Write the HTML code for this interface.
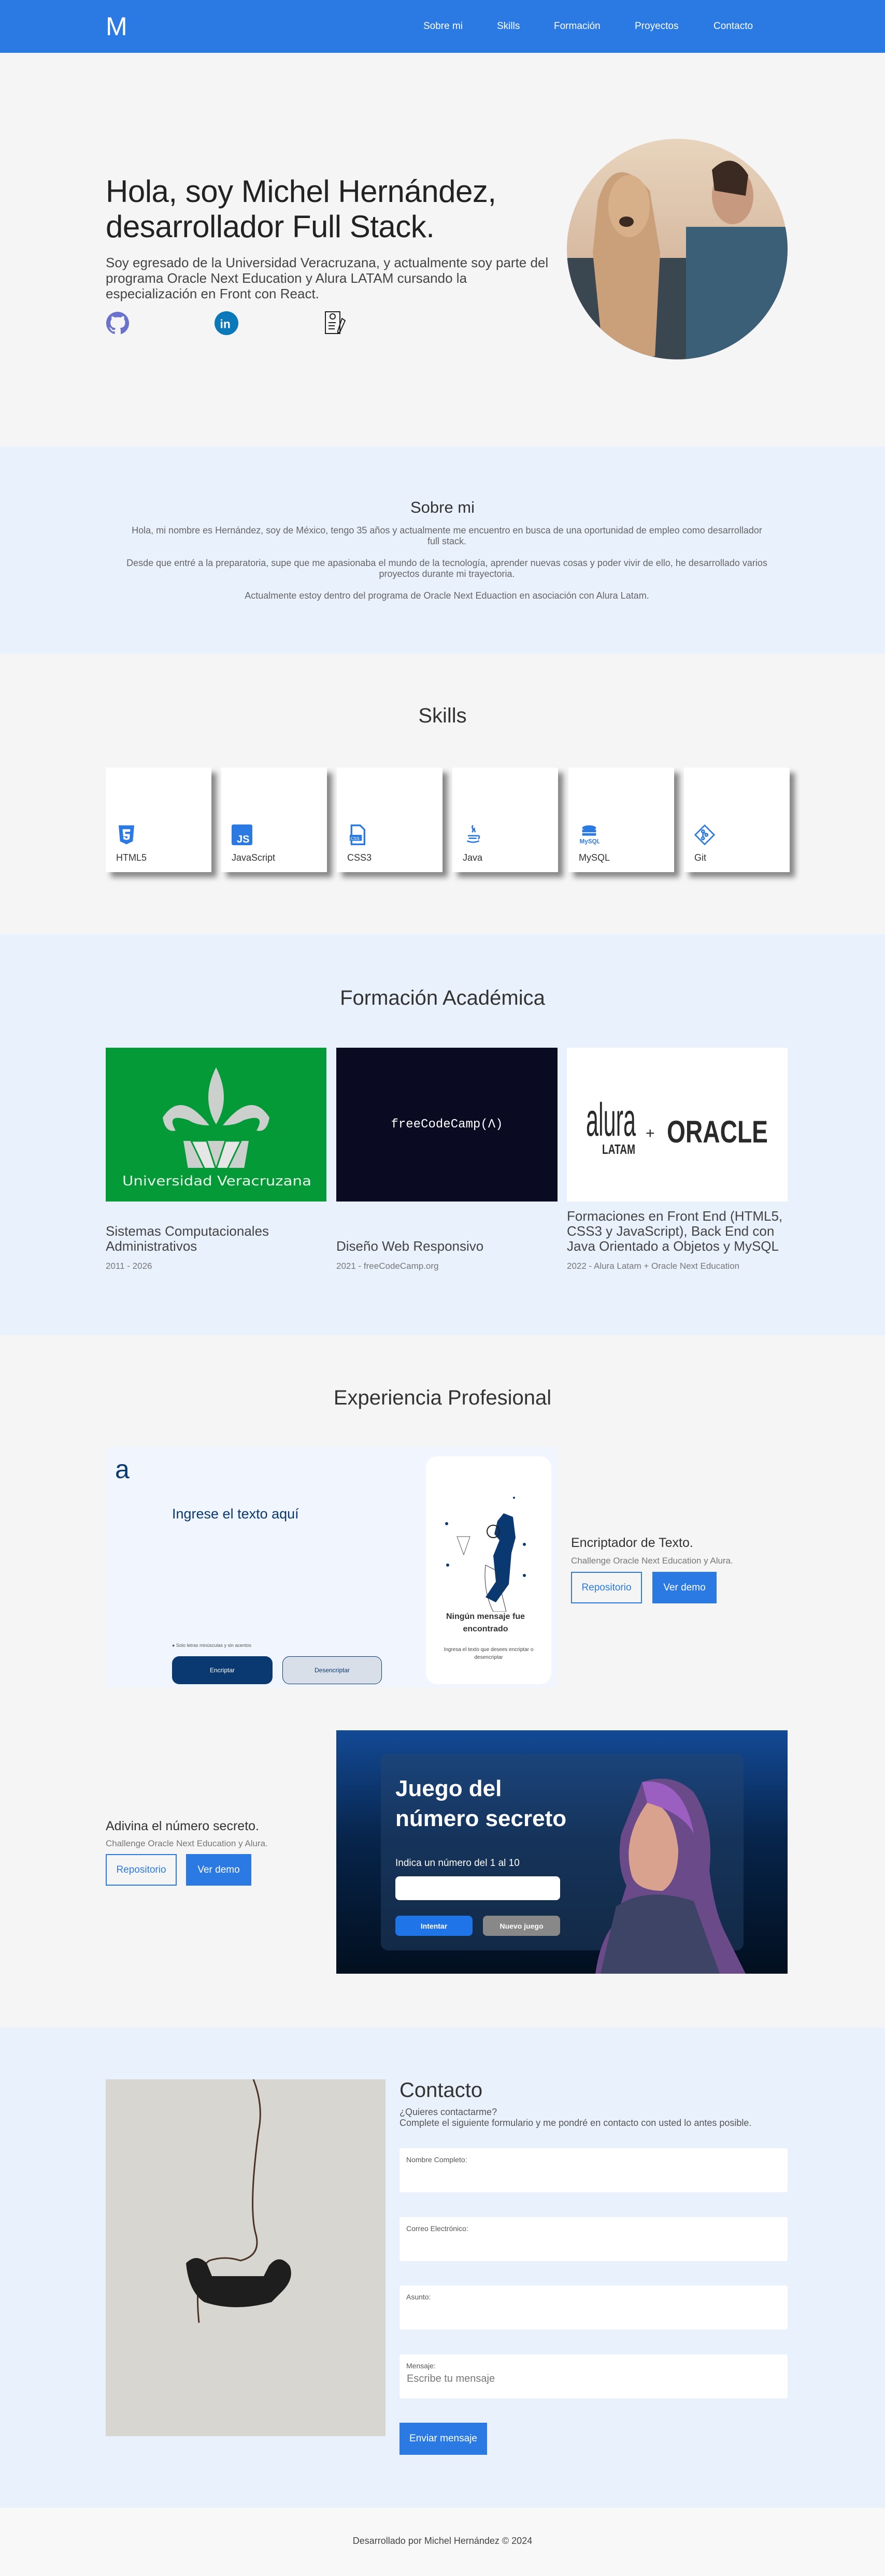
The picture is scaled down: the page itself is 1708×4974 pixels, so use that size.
<!DOCTYPE html>
<html><head><meta charset="utf-8"><style>
*{margin:0;padding:0;box-sizing:border-box}
body{width:1708px;height:4974px;font-family:"Liberation Sans",sans-serif;background:#f5f5f5;color:#333;position:relative;overflow:hidden}
.abs{position:absolute}
nav{position:absolute;left:0;top:0;width:1708px;height:102px;background:#2b7ae4}
nav .logo{position:absolute;left:204px;top:22px;color:#fff;font-size:50px;font-weight:300}
nav a{position:absolute;top:40px;color:#fff;font-size:19px;text-decoration:none}
h2{position:absolute;left:0;width:1708px;text-align:center;font-weight:400;color:#333}
.sec{position:absolute;left:0;width:1708px}
.card{position:absolute;top:1482px;width:204px;height:202px;background:#fff;box-shadow:10px 10px 10px rgba(0,0,0,.45)}
.card .ic{position:absolute;left:20px;top:110px;width:40px;height:40px}
.card span{position:absolute;left:20px;top:164px;font-size:18px;color:#333}
.ftitle{position:absolute;font-size:26px;color:#444;line-height:29px}
.fdate{position:absolute;top:2435px;font-size:17px;color:#777}
.btn{position:absolute;height:61px;display:flex;align-items:center;justify-content:center;font-size:19px}
.bo{border:2px solid #2b7ae4;color:#2b7ae4;background:transparent}
.bf{background:#2b7ae4;color:#fff}
.inp{position:absolute;left:771px;width:749px;height:85px;background:#fff;border-radius:4px}
.inp span{position:absolute;left:13px;top:14px;font-size:14px;color:#555}
</style></head><body>
<nav><div class="logo">M</div>
<a style="left:817px">Sobre mi</a><a style="left:959px">Skills</a><a style="left:1069px">Formación</a><a style="left:1225px">Proyectos</a><a style="left:1377px">Contacto</a></nav>

<div class="abs" style="left:204px;top:336px;font-size:60px;line-height:68px;color:#222;width:920px;letter-spacing:-0.5px">Hola, soy Michel Hernández,<br>desarrollador Full Stack.</div>
<div class="abs" style="left:204px;top:492px;font-size:26px;line-height:30px;color:#444;width:880px">Soy egresado de la Universidad Veracruzana, y actualmente soy parte del programa Oracle Next Education y Alura LATAM cursando la especialización en Front con React.</div>
<svg class="abs" style="left:204px;top:600px" width="46" height="48" viewBox="0 0 24 24"><path fill="#6b72cc" d="M12 .5C5.6.5.5 5.6.5 12c0 5.1 3.3 9.4 7.9 10.9.6.1.8-.3.8-.6v-2c-3.2.7-3.9-1.5-3.9-1.5-.5-1.300-1.3-1.7-1.3-1.7-1-.7.1-.7.1-.7 1.2.1 1.8 1.2 1.8 1.2 1 1.8 2.8 1.3 3.5 1 .1-.8.4-1.3.7-1.600-2.6-.3-5.3-1.3-5.3-5.7 0-1.3.5-2.3 1.2-3.1-.1-.3-.5-1.5.1-3.1 0 0 1-.3 3.2 1.2a11 11 0 0 1 5.8 0C17.3 4.7 18.3 5 18.3 5c.6 1.6.2 2.8.1 3.1.8.8 1.2 1.8 1.2 3.1 0 4.4-2.7 5.4-5.3 5.7.4.4.8 1.1.8 2.2v3.2c0 .3.2.7.8.6A11.5 11.5 0 0 0 23.5 12C23.5 5.6 18.4.5 12 .5z"/></svg>
<svg class="abs" style="left:414px;top:600px" width="46" height="48" viewBox="0 0 24 24"><circle cx="12" cy="12" r="12" fill="#0a78b9"/><text x="5.5" y="17" font-family="Liberation Sans" font-weight="700" font-size="12" fill="#fff">in</text></svg>
<svg class="abs" style="left:622px;top:598px" width="48" height="50" viewBox="0 0 24 24" fill="none" stroke="#222" stroke-width="1"><rect x="3" y="1.5" width="14" height="21"/><circle cx="10" cy="6" r="2.5"/><path d="M6 12h7M6 15h6M6 18h6M19 8l3 2-5 11-2 1 0-2z"/></svg>
<svg class="abs" style="left:1094px;top:268px" width="426" height="426"><defs><clipPath id="c"><circle cx="213" cy="213" r="213"/></clipPath><linearGradient id="g" x1="0" y1="0" x2="0" y2="1"><stop offset="0" stop-color="#e8d4bd"/><stop offset="1" stop-color="#c9a48a"/></linearGradient></defs><g clip-path="url(#c)"><rect width="426" height="426" fill="url(#g)"/><rect x="0" y="230" width="426" height="196" fill="#3a4650"/><rect x="230" y="170" width="196" height="256" fill="#3c5f78"/><ellipse cx="320" cy="110" rx="40" ry="55" fill="#c79a80"/><path d="M280 60q40-40 70 10l-5 40-60-10z" fill="#3a2a22"/><path d="M60 120q30-100 100-20l20 120-10 200h-100l-20-200z" fill="#caa07a"/><ellipse cx="120" cy="130" rx="40" ry="60" fill="#d7b08a"/><ellipse cx="115" cy="160" rx="14" ry="10" fill="#3a2a22"/></g></svg>

<div class="sec" style="top:862px;height:400px;background:#e9f1fc"></div>
<h2 style="top:962px;font-size:31px">Sobre mi</h2>
<div class="abs" style="left:209px;top:1014px;width:1307px;text-align:center;font-size:18px;line-height:21px;color:#666">Hola, mi nombre es Hernández, soy de México, tengo 35 años y actualmente me encuentro en busca de una oportunidad de empleo como desarrollador<br>full stack.<br><br>Desde que entré a la preparatoria, supe que me apasionaba el mundo de la tecnología, aprender nuevas cosas y poder vivir de ello, he desarrollado varios proyectos durante mi trayectoria.<br><br>Actualmente estoy dentro del programa de Oracle Next Eduaction en asociación con Alura Latam.</div>

<h2 style="top:1360px;font-size:40px">Skills</h2>
<div class="card" style="left:204px"><svg class="ic" viewBox="0 0 24 24"><path d="M3 1h18l-1.6 18.5L12 23l-7.4-3.5z" fill="#2b7ae4"/><path d="M7.5 5.5h9l-.3 3H10.5l.2 2.5h5.3l-.5 6L12 18l-3.5-1-.2-2.5h2.5l.1 1.2 1.1.3 1.2-.3.1-2H8.3z" fill="#fff"/></svg><span>HTML5</span></div>
<div class="card" style="left:427px"><svg class="ic" viewBox="0 0 24 24"><rect width="24" height="24" rx="2" fill="#2b7ae4"/><text x="6" y="21" font-family="Liberation Sans" font-weight="700" font-size="12" fill="#fff">JS</text></svg><span>JavaScript</span></div>
<div class="card" style="left:650px"><svg class="ic" viewBox="0 0 24 24"><path d="M5 1h10l5 5v17H5z" fill="none" stroke="#2b7ae4" stroke-width="2"/><rect x="3" y="12" width="14" height="7" fill="#2b7ae4"/><text x="4" y="18" font-size="5" fill="#fff" font-family="Liberation Sans">CSS</text></svg><span>CSS3</span></div>
<div class="card" style="left:873px"><svg class="ic" viewBox="0 0 24 24" fill="none" stroke="#2b7ae4" stroke-width="1.6"><path d="M12 1c-3 3 2 4-1 8M14 4c-2 2 1 3 0 5M6 13h11M7 16h9M5 19q7 3 14 0M17 13q4 0 1 4"/></svg><span>Java</span></div>
<div class="card" style="left:1097px"><svg class="ic" viewBox="0 0 24 24"><ellipse cx="12" cy="4" rx="8" ry="3" fill="#2b7ae4"/><rect x="4" y="6" width="16" height="3" fill="#2b7ae4"/><rect x="4" y="10" width="16" height="3" fill="#2b7ae4"/><text x="1" y="22" font-size="7" font-weight="700" fill="#2b7ae4" font-family="Liberation Sans">MySQL</text></svg><span>MySQL</span></div>
<div class="card" style="left:1320px"><svg class="ic" viewBox="0 0 24 24" fill="none" stroke="#2b7ae4" stroke-width="1.6"><path d="M12 1l11 11-11 11L1 12z"/><circle cx="10" cy="8" r="1.5"/><circle cx="14" cy="12" r="1.5"/><circle cx="10" cy="16" r="1.5"/><path d="M10 9.5v5M11 9l2 2"/></svg><span>Git</span></div>

<div class="sec" style="top:1804px;height:774px;background:#e9f1fc"></div>
<h2 style="top:1905px;font-size:40px">Formación Académica</h2>
<svg class="abs" style="left:204px;top:2023px" width="426" height="297"><rect width="426" height="297" fill="#039a37"/><path d="M213 38q-30 60 0 110q30-50 0-110zM200 150q-55-70-90-15 5 30 25 25-20-35 25-20 15 10 40 10zM226 150q55-70 90-15-5 30-25 25 20-35-25-20-15 10-40 10z" fill="#ccd0cc"/><path d="M150 180h126l-10 60q-53 50-106 0z" fill="#ccd0cc"/><path d="M165 180h30l18 55 18-55h30l-48 100z" fill="#e6e6e6" stroke="#039a37" stroke-width="3"/><rect x="0" y="232" width="426" height="65" fill="#039a37"/><text x="32" y="266" textLength="365" lengthAdjust="spacingAndGlyphs" font-family="DejaVu Sans" font-size="26" fill="#e8f0e8">Universidad Veracruzana</text></svg>
<div class="abs" style="left:649px;top:2023px;width:427px;height:297px;background:#0a0a23;color:#fff;font-family:'Liberation Mono',monospace;font-size:24px;display:flex;align-items:center;justify-content:center">freeCodeCamp(&#923;)</div>
<svg class="abs" style="left:1094px;top:2023px" width="426" height="297"><rect width="426" height="297" fill="#fff"/><text x="37" y="170" textLength="96" lengthAdjust="spacingAndGlyphs" font-family="Liberation Sans" font-size="90" fill="#2a2a2a">alura</text><text x="68" y="205" textLength="64" lengthAdjust="spacingAndGlyphs" font-family="Liberation Sans" font-weight="700" font-size="26" fill="#2a2a2a">LATAM</text><text x="152" y="175" font-family="Liberation Sans" font-size="30" fill="#2a2a2a">+</text><text x="193" y="183" textLength="195" lengthAdjust="spacingAndGlyphs" font-family="Liberation Sans" font-weight="700" font-size="60" fill="#2a2a2a">ORACLE</text></svg>
<div class="ftitle" style="left:204px;top:2363px">Sistemas Computacionales<br>Administrativos</div>
<div class="ftitle" style="left:649px;top:2392px">Diseño Web Responsivo</div>
<div class="ftitle" style="left:1094px;top:2334px;width:430px">Formaciones en Front End (HTML5, CSS3 y JavaScript), Back End con Java Orientado a Objetos y MySQL</div>
<div class="fdate" style="left:204px">2011 - 2026</div>
<div class="fdate" style="left:649px">2021 - freeCodeCamp.org</div>
<div class="fdate" style="left:1094px">2022 - Alura Latam + Oracle Next Education</div>

<h2 style="top:2677px;font-size:40px">Experiencia Profesional</h2>
<div class="abs" style="left:204px;top:2794px;width:872px;height:464px;background:#f1f5fd">
<div class="abs" style="left:18px;top:14px;font-size:50px;color:#0a3871">a</div>
<div class="abs" style="left:128px;top:114px;font-size:27px;color:#0a3871">Ingrese el texto aquí</div>
<div class="abs" style="left:128px;top:378px;font-size:9px;color:#555">● Solo letras minúsculas y sin acentos</div>
<div class="abs" style="left:128px;top:404px;width:194px;height:54px;border-radius:14px;background:#0a3871;color:#fff;font-size:12px;display:flex;align-items:center;justify-content:center">Encriptar</div>
<div class="abs" style="left:341px;top:404px;width:192px;height:54px;border-radius:14px;background:#d8dfe8;border:1px solid #0a3871;color:#0a3871;font-size:12px;display:flex;align-items:center;justify-content:center">Desencriptar</div>
<div class="abs" style="left:618px;top:18px;width:242px;height:440px;border-radius:22px;background:#fff">
<svg class="abs" style="left:20px;top:60px" width="200" height="240"><path d="M130 50l-12 15-6 25 10 12-12 30 5 50-20 30 20 10 25-35 5-60 8-30-5-40z" fill="#0a3871"/><path d="M95 150q-5 50 15 90h25l-20-80z" fill="none" stroke="#333"/><circle cx="110" cy="85" r="12" fill="none" stroke="#222" stroke-width="2"/><path d="M40 95h25l-12 35z" fill="none" stroke="#555"/><circle cx="20" cy="70" r="3" fill="#0a3871"/><circle cx="22" cy="150" r="3" fill="#0a3871"/><circle cx="170" cy="110" r="3" fill="#0a3871"/><circle cx="170" cy="170" r="3" fill="#0a3871"/><circle cx="150" cy="20" r="2" fill="#0a3871"/></svg>
<div class="abs" style="left:0;width:230px;top:298px;text-align:center;font-size:16px;color:#333;font-weight:700;line-height:24px">Ningún mensaje fue<br>encontrado</div>
<div class="abs" style="left:10px;width:222px;top:366px;text-align:center;font-size:10px;color:#444;line-height:15px">Ingresa el texto que desees encriptar o desencriptar</div></div>
</div>
<div class="abs" style="left:1102px;top:2965px;font-size:25px;color:#333">Encriptador de Texto.</div>
<div class="abs" style="left:1102px;top:3004px;font-size:17px;color:#777">Challenge Oracle Next Education y Alura.</div>
<div class="btn bo" style="left:1102px;top:3035px;width:137px">Repositorio</div>
<div class="btn bf" style="left:1259px;top:3035px;width:124px">Ver demo</div>

<div class="abs" style="left:649px;top:3341px;width:871px;height:470px;background:linear-gradient(#134a96,#07244a 45%,#020f1f);overflow:hidden">
<div class="abs" style="left:86px;top:45px;width:700px;height:380px;border-radius:14px;background:rgba(40,70,110,.45)"></div>
<svg class="abs" style="left:480px;top:80px" width="330" height="390"><path d="M110 20q60-20 100 20 40 60 30 150 10 80 30 120l40 80H20q10-70 40-100 10-40 20-70-20-40-10-100z" fill="#6b4a8a"/><path d="M120 60q50 0 60 90 0 60-30 80-50 0-60-30-20-70 30-140z" fill="#d9a28e"/><path d="M60 260q60-40 150-10l50 140H30z" fill="#3d4466"/><path d="M110 20q80-10 100 100-20-40-90-60z" fill="#9b5fc2"/></svg>
<div class="abs" style="left:114px;top:84px;font-size:44px;font-weight:700;color:#fff;line-height:58px">Juego del<br>número secreto</div>
<div class="abs" style="left:114px;top:246px;font-size:19px;color:#fff">Indica un número del 1 al 10</div>
<div class="abs" style="left:114px;top:282px;width:318px;height:46px;background:#fff;border-radius:8px"></div>
<div class="abs" style="left:114px;top:358px;width:149px;height:39px;background:#1f75e8;border-radius:8px;color:#fff;font-size:14px;font-weight:700;display:flex;align-items:center;justify-content:center">Intentar</div>
<div class="abs" style="left:283px;top:358px;width:149px;height:39px;background:#888;border-radius:8px;color:#fff;font-size:14px;font-weight:700;display:flex;align-items:center;justify-content:center">Nuevo juego</div>
</div>
<div class="abs" style="left:204px;top:3512px;font-size:25px;color:#333">Adivina el número secreto.</div>
<div class="abs" style="left:204px;top:3550px;font-size:17px;color:#777">Challenge Oracle Next Education y Alura.</div>
<div class="btn bo" style="left:204px;top:3580px;width:137px">Repositorio</div>
<div class="btn bf" style="left:359px;top:3580px;width:126px">Ver demo</div>

<div class="sec" style="top:3915px;height:927px;background:#e9f1fc"></div>
<svg class="abs" style="left:204px;top:4015px" width="540" height="689"><rect width="540" height="689" fill="#d8d6d1"/><path d="M285 0q20 50 10 100-20 150-5 200 10 40-30 50-30-10-60 0-30 20-20 120 20 40" fill="none" stroke="#4a3325" stroke-width="3"/><path d="M155 355q20-20 40 0l10 25h100l10-20q20-25 40 0 10 25-15 50l-20 20q-70 20-130 0-30-20-35-75z" fill="#1e1e1e"/></svg>
<div class="abs" style="left:771px;top:4014px;font-size:40px;color:#333">Contacto</div>
<div class="abs" style="left:771px;top:4068px;font-size:18px;color:#555;line-height:21px">¿Quieres contactarme?<br>Complete el siguiente formulario y me pondré en contacto con usted lo antes posible.</div>
<div class="inp" style="top:4148px"><span>Nombre Completo:</span></div>
<div class="inp" style="top:4281px"><span>Correo Electrónico:</span></div>
<div class="inp" style="top:4413px"><span>Asunto:</span></div>
<div class="inp" style="top:4546px"><span>Mensaje:</span><div class="abs" style="left:14px;top:36px;font-size:20px;color:#777">Escribe tu mensaje</div></div>
<div class="btn bf" style="left:771px;top:4678px;width:169px;height:62px">Enviar mensaje</div>

<div class="sec" style="top:4842px;height:132px;background:#f8f8f8"></div>
<div class="abs" style="left:0;width:1708px;top:4896px;text-align:center;font-size:18px;color:#444">Desarrollado por Michel Hernández © 2024</div>
</body></html>
